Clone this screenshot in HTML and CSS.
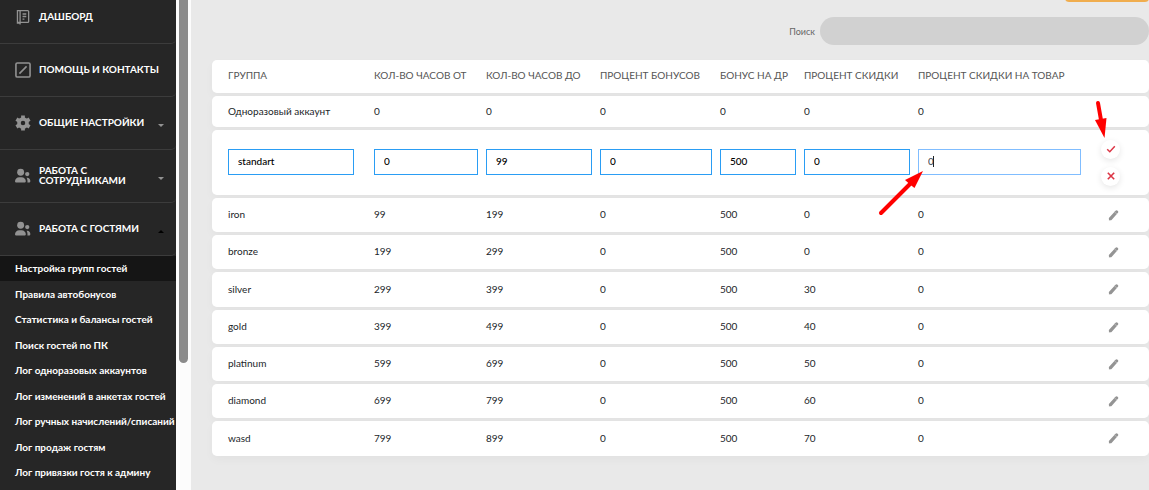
FILE: index.html
```html
<!DOCTYPE html>
<html lang="ru">
<head>
    <meta charset="UTF-8">
    <meta name="viewport" content="width=device-width, initial-scale=1.0">
    <title>Настройка групп гостей</title>
    <link rel="stylesheet" href="styles.css">
</head>
<body>
    <svg class="sprite" aria-hidden="true">
        <symbol id="icon-users" viewBox="0 0 17 16">
            <circle cx="6" cy="4" r="3.7"/>
            <circle cx="13" cy="6" r="2.3"/>
            <path d="M0 13.5C0 11 2 9.2 4.500 9.200h2.500c2.500 0 4.500 1.800 4.500 4.300 0 .900-.700 1.500-1.500 1.500H1.500C.7 15 0 14.400 0 13.500z"/>
            <path d="M12.300 9.800c2.400-.300 4 1.200 4 3.400 0 1.200-.600 1.800-1.700 1.800h-1.400c.3-2-.1-3.700-.9-5.200z"/>
        </symbol>
        <symbol id="icon-pencil" viewBox="0 0 12 12">
            <path d="M2.800 9.400 9.300 2.200" stroke="#949494" stroke-width="3.600" stroke-linecap="round"/>
            <path d="M6.900 1.900 9.900 4.600" stroke="#c4c4c4" stroke-width=".8"/>
            <path d="M1 11.400 1.200 8.500 3.600 10.700z" fill="#949494"/>
        </symbol>
    </svg>

    <div class="page">
        <aside class="sidebar">
            <nav class="menu">
                <a class="menu-item" href="#">
                    <svg class="menu-icon" viewBox="0 0 17 17" fill="none" stroke="#929292" stroke-width="1.4">
                        <path d="M3 1.700h10.500a1 1 0 0 1 1 1v10.600a1 1 0 0 1-1 1H3.600a1 1 0 0 1-1-1V1.700zM5.400 1.700V16.500M2.600 13.300V15h2.800M8 5.300h4M8 8h4M8 10.700h2"/>
                    </svg>
                    <span class="menu-text">ДАШБОРД</span>
                </a>
                <a class="menu-item" href="#">
                    <svg class="menu-icon" viewBox="0 0 17 17" fill="none" stroke="#929292" stroke-width="1.7">
                        <rect x="1" y="1" width="15" height="15" rx="1.500"/>
                        <path d="M4.700 12.300 12.300 4.700"/>
                    </svg>
                    <span class="menu-text">ПОМОЩЬ И КОНТАКТЫ</span>
                </a>
                <a class="menu-item" href="#">
                    <svg class="menu-icon" viewBox="0 0 17 17" fill="none" stroke="#929292">
                        <circle cx="8.500" cy="8.500" r="4.300" stroke-width="3.800"/>
                        <path d="M8.500.4v3M8.500 13.600v3M1.500 4.500l2.600 1.500M12.900 11l2.600 1.500M1.500 12.500 4.100 11M12.900 6l2.600-1.500" stroke-width="4"/>
                    </svg>
                    <span class="menu-text">ОБЩИЕ НАСТРОЙКИ</span>
                    <span class="caret"></span>
                </a>
                <a class="menu-item" href="#">
                    <svg class="menu-icon" fill="#929292"><use href="#icon-users"/></svg>
                    <span class="menu-text">РАБОТА С СОТРУДНИКАМИ</span>
                    <span class="caret"></span>
                </a>
                <a class="menu-item" href="#">
                    <svg class="menu-icon" fill="#929292"><use href="#icon-users"/></svg>
                    <span class="menu-text">РАБОТА С ГОСТЯМИ</span>
                    <span class="caret caret-up"></span>
                </a>
            </nav>
            <ul class="submenu">
                <li class="active"><a href="#">Настройка групп гостей</a></li>
                <li><a href="#">Правила автобонусов</a></li>
                <li><a href="#">Статистика и балансы гостей</a></li>
                <li><a href="#">Поиск гостей по ПК</a></li>
                <li><a href="#">Лог одноразовых аккаунтов</a></li>
                <li><a href="#">Лог изменений в анкетах гостей</a></li>
                <li><a href="#">Лог ручных начислений/списаний</a></li>
                <li><a href="#">Лог продаж гостям</a></li>
                <li><a href="#">Лог привязки гостя к админу</a></li>
            </ul>
        </aside>
        <div class="scrollbar"><div class="scrollbar-thumb"></div></div>

        <main class="content">
            <div class="toolbar">
                <button class="btn-add" type="button" aria-label="Добавить"></button>
            </div>
            <div class="search">
                <label for="search">Поиск</label>
                <input type="search" id="search">
            </div>

            <table class="groups">
                <colgroup>
                    <col class="col-name">
                    <col class="col-from">
                    <col class="col-to">
                    <col class="col-bonus">
                    <col class="col-birthday">
                    <col class="col-discount">
                    <col class="col-goods">
                    <col class="col-actions">
                </colgroup>
                <thead>
                    <tr>
                        <th>ГРУППА</th>
                        <th>КОЛ-ВО ЧАСОВ ОТ</th>
                        <th>КОЛ-ВО ЧАСОВ ДО</th>
                        <th>ПРОЦЕНТ БОНУСОВ</th>
                        <th>БОНУС НА ДР</th>
                        <th>ПРОЦЕНТ СКИДКИ</th>
                        <th>ПРОЦЕНТ СКИДКИ НА ТОВАР</th>
                        <th></th>
                    </tr>
                </thead>
                <tbody>
                    <tr class="row-single">
                        <td>Одноразовый аккаунт</td><td>0</td><td>0</td><td>0</td><td>0</td><td>0</td><td>0</td><td></td>
                    </tr>
                    <tr class="row-edit">
                        <td><input type="text" value="standart" aria-label="Группа"></td>
                        <td><input type="text" value="0" aria-label="Кол-во часов от"></td>
                        <td><input type="text" value="99" aria-label="Кол-во часов до"></td>
                        <td><input type="text" value="0" aria-label="Процент бонусов"></td>
                        <td><input type="text" value="500" aria-label="Бонус на ДР"></td>
                        <td><input type="text" value="0" aria-label="Процент скидки"></td>
                        <td>
                            <input class="focused" type="text" value="0" aria-label="Процент скидки на товар">
                            <span class="text-cursor"></span>
                            <svg class="arrow arrow-input" viewBox="0 0 46 46">
                                <path d="M3 43 32 14" stroke="#f00" stroke-width="4" stroke-linecap="round"/>
                                <path d="M45 1 36.500 18 32 14.500 27 10z" fill="#f00"/>
                            </svg>
                        </td>
                        <td>
                            <div class="actions">
                                <button class="btn-round" type="button" aria-label="Сохранить">
                                    <svg viewBox="0 0 10 10"><path d="M1.200 5.200 3.800 7.700 8.800 2.300" stroke="#dc3545" stroke-width="1.500" fill="none"/></svg>
                                </button>
                                <button class="btn-round" type="button" aria-label="Отмена">
                                    <svg viewBox="0 0 10 10"><path d="M1.800 1.800 8.200 8.200M8.200 1.800 1.800 8.200" stroke="#dc3545" stroke-width="1.600"/></svg>
                                </button>
                            </div>
                            <svg class="arrow arrow-save" viewBox="0 0 14 40">
                                <path d="M4 3 7 20" stroke="#f00" stroke-width="4" stroke-linecap="round"/>
                                <path d="M1 20 12.500 18 10.500 38z" fill="#f00"/>
                            </svg>
                        </td>
                    </tr>
                    <tr>
                        <td>iron</td><td>99</td><td>199</td><td>0</td><td>500</td><td>0</td><td>0</td>
                        <td><button class="btn-edit" type="button" aria-label="Изменить"><svg><use href="#icon-pencil"/></svg></button></td>
                    </tr>
                    <tr>
                        <td>bronze</td><td>199</td><td>299</td><td>0</td><td>500</td><td>0</td><td>0</td>
                        <td><button class="btn-edit" type="button" aria-label="Изменить"><svg><use href="#icon-pencil"/></svg></button></td>
                    </tr>
                    <tr>
                        <td>silver</td><td>299</td><td>399</td><td>0</td><td>500</td><td>30</td><td>0</td>
                        <td><button class="btn-edit" type="button" aria-label="Изменить"><svg><use href="#icon-pencil"/></svg></button></td>
                    </tr>
                    <tr>
                        <td>gold</td><td>399</td><td>499</td><td>0</td><td>500</td><td>40</td><td>0</td>
                        <td><button class="btn-edit" type="button" aria-label="Изменить"><svg><use href="#icon-pencil"/></svg></button></td>
                    </tr>
                    <tr>
                        <td>platinum</td><td>599</td><td>699</td><td>0</td><td>500</td><td>50</td><td>0</td>
                        <td><button class="btn-edit" type="button" aria-label="Изменить"><svg><use href="#icon-pencil"/></svg></button></td>
                    </tr>
                    <tr>
                        <td>diamond</td><td>699</td><td>799</td><td>0</td><td>500</td><td>60</td><td>0</td>
                        <td><button class="btn-edit" type="button" aria-label="Изменить"><svg><use href="#icon-pencil"/></svg></button></td>
                    </tr>
                    <tr>
                        <td>wasd</td><td>799</td><td>899</td><td>0</td><td>500</td><td>70</td><td>0</td>
                        <td><button class="btn-edit" type="button" aria-label="Изменить"><svg><use href="#icon-pencil"/></svg></button></td>
                    </tr>
                </tbody>
            </table>
        </main>
    </div>
</body>
</html>
```

FILE: styles.css
```css
* {
    box-sizing: border-box;
}

body {
    margin: 0;
    font-family: Lato, sans-serif;
    font-size: 10px;
    background-color: #e9e9e9;
}

button {
    padding: 0;
    border: none;
    cursor: pointer;
}

.sprite {
    display: none;
}

.page {
    display: flex;
    height: 100vh;
    overflow: hidden;
}

/* Sidebar */
.sidebar {
    flex: 0 0 176px;
    background-color: #262626;
}

.sidebar a {
    color: #fff;
    font-weight: bold;
    text-decoration: none;
}

.menu {
    margin-top: -9px;
}

.menu-item {
    display: flex;
    align-items: center;
    gap: 8px;
    height: 53px;
    padding: 0 10px 0 15px;
    border-bottom: 1px solid #3c3c3c;
    border-bottom-right-radius: 5px;
    line-height: 10px;
}

.menu-icon {
    flex: none;
    width: 16px;
    height: 16px;
}

.menu-text {
    flex: 1;
    padding-bottom: 2px;
}

.caret {
    border: 3px solid transparent;
    border-top-color: #929292;
    border-bottom: none;
    margin-top: 4px;
    margin-right: 2px;
}

.caret-up {
    border-top: none;
    border-bottom: 3px solid #000;
}

.submenu {
    list-style: none;
    margin: 0;
    padding: 0;
}

.submenu a {
    display: block;
    padding-left: 15px;
    font-size: 10px;
    line-height: 25px;
    white-space: nowrap;
}

.submenu li:nth-child(even) a {
    line-height: 26px;
}

.submenu .active {
    background-color: #151515;
}

.scrollbar {
    flex: 0 0 15px;
    padding: 0 3px;
    background-color: #fcfcfc;
}

.scrollbar-thumb {
    height: 74%;
    background-color: #8b8b8b;
    border-radius: 0 0 5px 5px;
}

/* Content */
.content {
    flex: 1;
    min-width: 0;
    padding-left: 21px;
}

.toolbar {
    display: flex;
    justify-content: flex-end;
    align-items: flex-end;
    height: 2px;
    overflow: hidden;
}

.btn-add {
    flex: none;
    width: 84px;
    height: 28px;
    background-color: #f0ad4e;
    border-radius: 4px;
}

.search {
    display: flex;
    justify-content: flex-end;
    align-items: center;
    gap: 5px;
    margin: 15px 0 12px;
    color: #666;
    font-size: 9px;
}

.search input {
    width: 329px;
    height: 28px;
    padding: 0 14px;
    border: none;
    border-radius: 14px;
    background-color: #d1d1d1;
}

.groups {
    width: 100%;
    table-layout: fixed;
    border-collapse: separate;
    border-spacing: 0 3px;
    color: #212529;
}

.col-name { width: 158px; }
.col-from { width: 112px; }
.col-to { width: 114px; }
.col-bonus { width: 120px; }
.col-birthday { width: 84px; }
.col-discount { width: 114px; }
.col-goods { width: 171px; }
.col-actions { width: 64px; }

.groups tr {
    border-radius: 5px;
    box-shadow: 0 4px 10px rgba(0, 0, 0, 0.03);
}

.groups th,
.groups td {
    height: 34px;
    padding: 0 4px 2px;
    background-color: #fff;
    text-align: left;
    white-space: nowrap;
}

.groups th {
    height: 33px;
    padding-bottom: 4px;
    color: #555;
    font-weight: normal;
}

.groups tr > :first-child {
    padding-left: 16px;
    padding-right: 16px;
    border-radius: 5px 0 0 5px;
}

.groups tr > :last-child {
    padding-bottom: 0;
    border-radius: 0 5px 5px 0;
}

.groups .row-single td {
    height: 31px;
}

.groups .row-edit td {
    position: relative;
    height: 65px;
    padding-bottom: 2px;
}

.groups tr:nth-child(5) td,
.groups tr:nth-child(9) td {
    height: 35px;
}

.row-edit input {
    display: block;
    width: 100%;
    height: 26px;
    padding: 0 9px 2px;
    border: 1px solid #2a9df4;
    border-radius: 0;
    outline: none;
    background-color: #fff;
    color: #000;
    font-family: inherit;
    font-size: 10px;
    font-weight: 500;
}

.row-edit .focused {
    border-color: #80bdff;
    color: #495057;
}

.text-cursor {
    position: absolute;
    left: 19px;
    top: 26px;
    width: 1px;
    height: 11px;
    background-color: #222;
}

.actions {
    display: flex;
    flex-direction: column;
    gap: 8px;
    padding: 2px 0 0 12px;
}

.btn-round {
    display: flex;
    align-items: center;
    justify-content: center;
    width: 19px;
    height: 19px;
    border-radius: 50%;
    background-color: #fff;
    box-shadow: 0 2px 6px rgba(0, 0, 0, 0.1);
}

.btn-round svg {
    width: 10px;
    height: 10px;
}

.btn-edit {
    display: block;
    margin-left: 19px;
    background: none;
}

.btn-edit svg {
    display: block;
    width: 11px;
    height: 11px;
}

/* Pointer arrows over the edited row */
.arrow {
    position: absolute;
    z-index: 1;
    fill: none;
}

.arrow-input {
    left: -36px;
    top: 40px;
    width: 46px;
    height: 46px;
}

.arrow-save {
    left: 9px;
    top: -30px;
    width: 14px;
    height: 40px;
}
```
